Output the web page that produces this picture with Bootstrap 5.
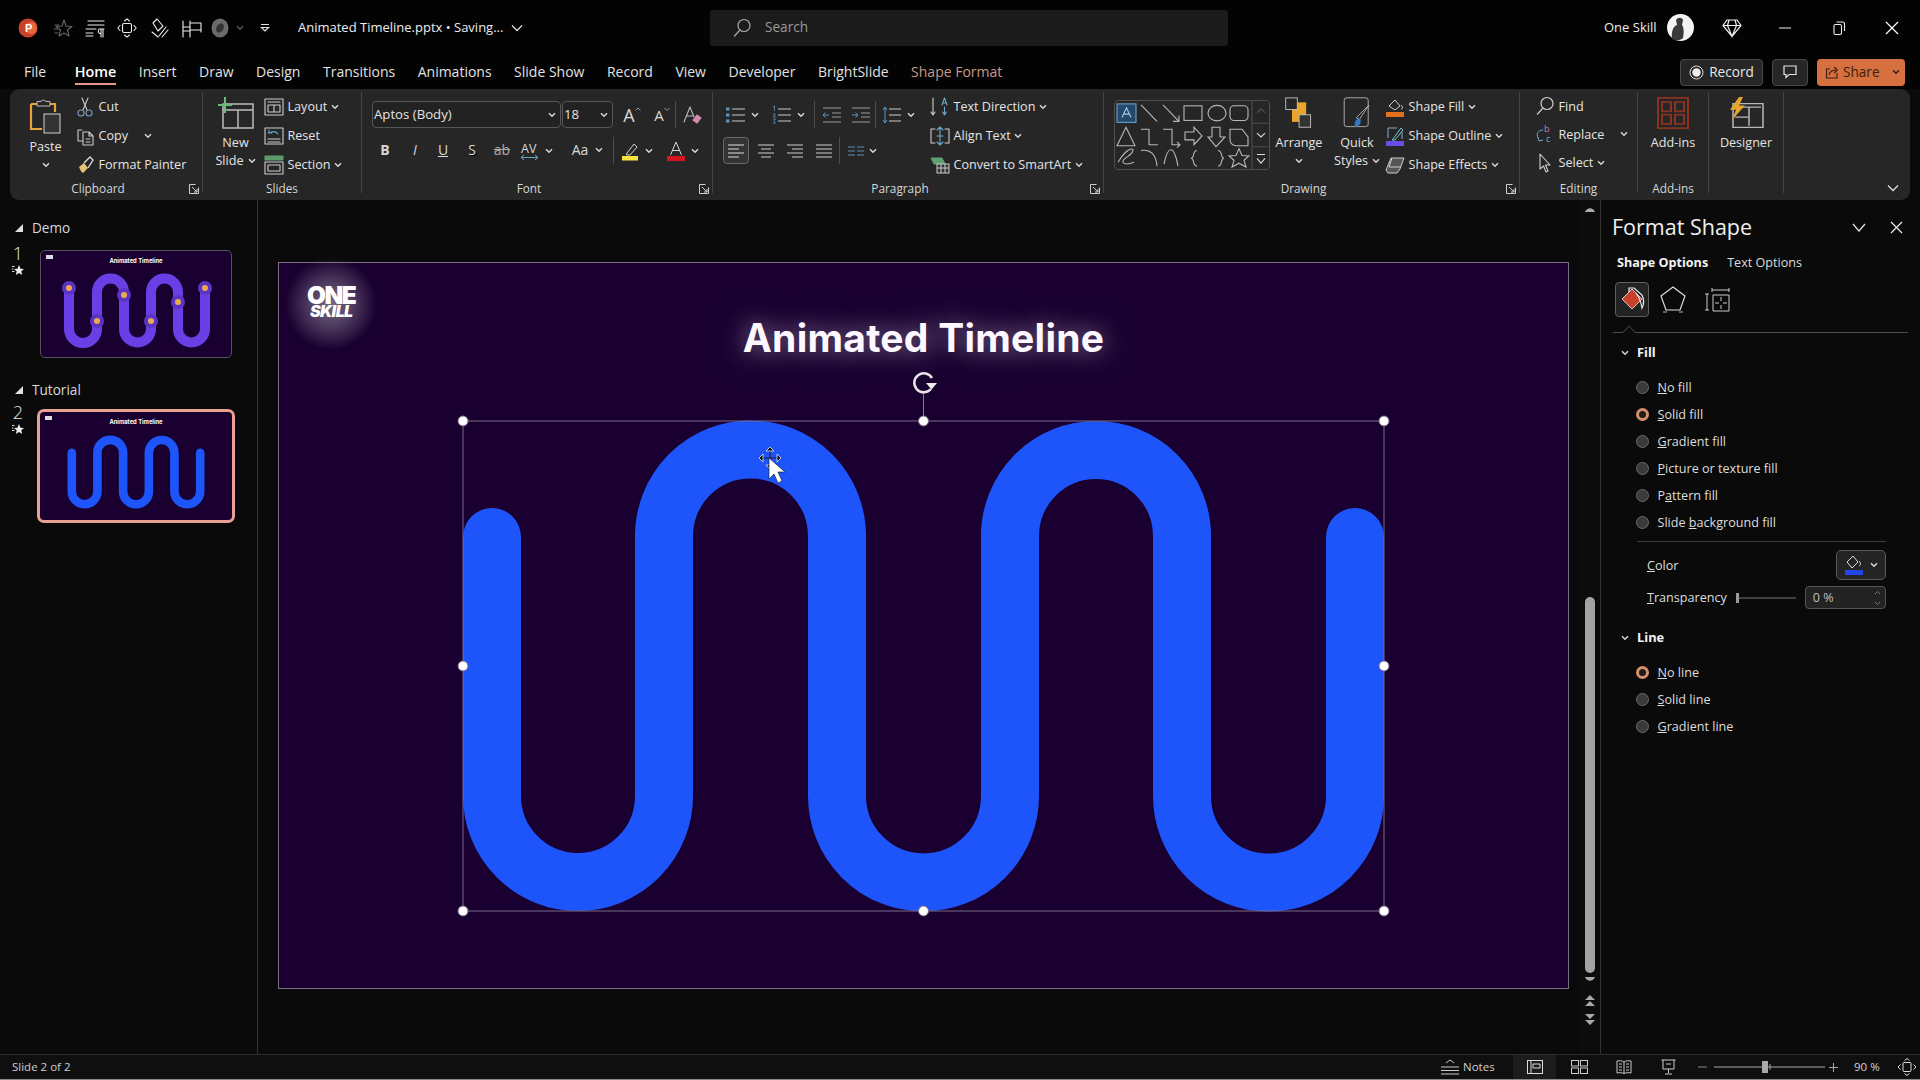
<!DOCTYPE html>
<html lang="en"><head><meta charset="utf-8"><title>Animated Timeline</title>
<link href="https://cdn.jsdelivr.net/npm/bootstrap@5.3.0/dist/css/bootstrap.min.css" rel="stylesheet">
<style>
html,body{margin:0;height:1080px;overflow:hidden;background:#0a0a0a}
body{font-family:"Open Sans","Noto Sans",sans-serif;font-size:12.6px;color:#e4e4e4;line-height:1.2}
svg{display:block;overflow:visible}
.ic{fill:none;stroke:#cdcdcd;stroke-width:1.1;stroke-linejoin:round;stroke-linecap:round}
.chv{width:8px;height:6px;fill:none;stroke:#d8d8d8;stroke-width:1.5}
.chv-dim{stroke:#555}
.chv-dk{stroke:#3a1d0e}
.app{height:1080px}
/* title bar */
.tbar{height:55px;background:#030303;display:grid;grid-template-columns:710px 518px 1fr;align-items:center}
.tleft{display:grid;grid-template-columns:35px 32px 32px 32px 33px 28px 26px 24px 38px auto;padding-left:18px;align-items:center;justify-items:start}
.search{height:36px;background:#1b1b1b;border-radius:3px;padding-left:22px;gap:13px;color:#9a9a9a;font-size:13.6px}
.tright{display:grid;grid-template-columns:63px 55px 57px 54px 52px auto;padding-left:376px;align-items:center;justify-items:start}
.ttl{font-size:13px;color:#ececec}
/* tabs */
.tabs{height:34px;background:#030303;padding-left:24px;padding-right:15px;gap:22.5px;font-size:14px;color:#e2e2e2}
.tab-home{font-weight:600;font-size:14.4px;color:#fff;position:relative;margin-left:6px}
.tab-home::after{content:"";position:absolute;left:0;right:0;bottom:-4px;height:2px;background:#e9968a}
.tab-fmt{color:#c89a86}
.tbtns{margin-left:auto;gap:9px}
.bt-rec,.bt-com{height:27px;border:1px solid #4a4a4a;border-radius:4px;background:#262626;color:#e8e8e8;font-size:13.6px}
.bt-rec{width:83px;gap:5px}
.bt-com{width:36px}
.bt-shr{width:88px;height:27px;border-radius:4px;background:#d7703f;color:#3a1d0e;font-size:13.6px;gap:4px;padding-left:8px}
/* ribbon */
.ribbon{height:111px;margin:0 10px;background:#262626;border-radius:9px;padding-top:3px;display:flex}
.grp{height:101px;border-right:1px solid #454545;display:flex;flex-direction:column;flex:none}
.gbody{height:85px}
.glabel{height:16px;display:flex;line-height:22px;font-size:11.8px;color:#d6d6d6}
.glabel>span{flex:1;text-align:center}
.launch{width:16px;padding-top:7px;padding-left:3px}
.g-clip{width:193px}.g-slides{width:159px}.g-font{width:351px}.g-para{width:391px}.g-draw{width:416px}.g-edit{width:118px}.g-add{width:71px}.g-des{width:75px}
.b-clip{display:grid;grid-template-columns:59px auto;padding-left:6px}
.b-slides{display:grid;grid-template-columns:57px auto;padding-left:4px}
.b-draw{display:grid;grid-template-columns:155px 60px 56px auto;padding-left:10px}
.b-para{display:grid;grid-template-columns:217px auto}
.b-edit{padding-left:15px}
.bigb{display:flex;flex-direction:column;align-items:center;line-height:18px;color:#e4e4e4;text-align:center;padding-top:5px}
.bigb>svg{margin-bottom:5px}
.bigb .chv{margin:6px 0 0}
.inl{display:flex;align-items:center;justify-content:center;gap:4px}
.inl .chv{margin:0}
.rrow{height:29px;display:flex;align-items:center;gap:3.5px;white-space:nowrap;color:#e4e4e4}
.rcol{display:flex;flex-direction:column;margin-top:0}
.rrow svg.ri{width:20px;height:20px;flex:none}
.ml12{margin-left:12px}
.frow{height:27px;display:grid;align-items:center;justify-items:start;margin-top:9px}
.frow+.frow{margin-top:9px}
.fr1{grid-template-columns:190px 60px 30px 23px 7px auto;padding-left:10px}
.fr2{grid-template-columns:30px 28px 29px 30px 28px 50px 43px 7px 46px auto;padding-left:13px}
.pr1{grid-template-columns:46px 42px 8px 29px 24px 7px auto;padding-left:13px}
.pr2{grid-template-columns:34px 29px 29px 24px 9px auto;padding-left:10px}
.combo{height:27px;border:1px solid #565656;border-radius:4px;background:#222;display:flex;align-items:center;justify-content:space-between;padding:0 4px 0 1px;color:#e4e4e4;font-size:13.2px}
.cb-font{width:189px}.cb-size{width:51px}
.vsep{width:1px;height:27px;background:#4c4c4c}
.cellx{width:20px;display:flex;justify-content:center;font-size:14px;color:#d8d8d8}
.a-up{font-size:18px;line-height:22px}.a-dn{font-size:15px;line-height:22px}
.a-up svg,.a-dn svg{width:6px;height:4px;fill:none;stroke:#9a9a9a;margin-top:3px}
.fb{font-weight:700}.fi{font-style:italic}.fu{text-decoration:underline}.fs{text-shadow:1px 1px 1px #000}.fst{text-decoration:line-through;color:#aaa}
.withc{display:flex;align-items:center;gap:5px}
.sel-al{width:26px;height:27px;border:1px solid #6a6a6a;border-radius:4px;background:#333;display:flex;align-items:center;justify-content:center}
.collapse-c{flex:1;display:flex;align-items:flex-end;justify-content:flex-end;padding:0 11px 8px 0}
/* main */
.mainr{height:854px;display:flex;margin-top:0}
.lpane{width:258px;border-right:1px solid #333;padding-top:18px;flex:none;background:#0a0a0a}
.sect{height:20px;display:flex;align-items:center;padding-left:15px;gap:9px;font-size:13.6px;color:#d8d8d8}
.tri{width:0;height:0;border-left:8px solid transparent;border-bottom:8px solid #e0e0e0}
.slrow{display:grid;grid-template-columns:40px auto;margin-top:12px}
.snum{display:flex;flex-direction:column;align-items:center;width:36px;font-size:18px;font-weight:300;line-height:20px;color:#e8e8e8;margin-top:-7px}
.snum svg{margin-top:1px}
.th{width:192px;height:108px;background:#190030;border:1px solid #5a5060;border-radius:5px;overflow:hidden;position:relative}
.slrow2{grid-template-columns:37px auto;margin-top:9px}
.th2{width:198px;height:114px;background:#190030;border:3px solid #e8a092;border-radius:7px;overflow:hidden;position:relative}
.thtitle{position:absolute;left:0;right:0;top:6px;text-align:center;font:700 5.8px/8px Inter,sans-serif;color:#fff}
.thlogo{position:absolute;left:5px;top:4px;width:7px;height:4px;background:#ddd}
.sect2{margin-top:22px}
.canvasw{width:1322px;flex:none;padding:62px 0 0 20px;background:#0a0a0a}
.slide{width:1291px;height:727px;background:#190030;border:1px solid #7b6e82;position:relative}
.slide>svg{position:absolute;left:-1px;top:-1px}
.s-title{position:absolute;left:0;right:0;top:51px;text-align:center;font:700 39px/48px Inter,sans-serif;letter-spacing:.25px;color:#fdf8ff;text-shadow:0 0 24px rgba(255,255,255,.5),0 0 55px rgba(255,255,255,.2)}
.s-glow{position:absolute;left:6px;top:-5px;width:92px;height:92px;background:radial-gradient(closest-side,rgba(255,255,255,.42),rgba(255,255,255,.2) 55%,rgba(255,255,255,0))}
.s-logo{position:absolute;left:28px;top:23px;width:56px;color:#fff;text-align:left;font-family:Inter,sans-serif;font-weight:900;font-style:italic;line-height:13px}
.lg1{font-size:24.5px;letter-spacing:-1.6px;font-style:normal;line-height:19px}
.lg2{font-size:16px;letter-spacing:-.6px;padding-left:3px;line-height:13px}
.sbar{width:20px;flex:none;position:relative;display:flex;flex-direction:column;align-items:center;background:#0c0c0c;padding-top:6px}
.sth{width:10px;height:376px;background:#a3a3a3;border-radius:5px;margin-top:385px}
.s-d1{margin-top:11px}
.fpane{width:320px;border-left:1px solid #333;padding:13px 12px 0 12px;flex:none;background:#0a0a0a}
.fhead{height:28px;font-size:21.5px;color:#f0f0f0;font-weight:400;margin-left:-1px}
.fhead .ms{margin-left:auto;gap:24px;padding-right:5px}
.ftabs{gap:19px;padding-left:4px;margin-top:14px;font-size:12.6px;color:#dcdcdc}
.ftabs b{font-weight:700;color:#f4f4f4}
.ficons{display:grid;grid-template-columns:45px 44px auto;align-items:center;justify-items:start;padding-left:2px;margin-top:11px;margin-bottom:5px;height:36px}
.fbox{width:34px;height:35px;border:1px solid #5e5e5e;border-radius:4px;background:#232323;display:flex;align-items:center;justify-content:center}
.fline{height:16px;margin-bottom:0}
.fsec{display:flex;align-items:center;gap:8px;font-weight:700;color:#f2f2f2;padding-left:8px;height:20px;font-size:12.8px;margin-top:5px}
.rdo{height:27px;display:flex;align-items:center;gap:8.5px;padding-left:23px;color:#dedede;font-size:12.6px}
.rdo i{width:13px;height:13px;border-radius:50%;background:#3a3a3a;border:1px solid #6a6a6a;display:block}
.rdo i.on{background:#1d1d1d;border:3.5px solid #d68f6a}
.radios{margin-top:11px}
.fsep{height:1px;background:#3d3d3d;margin:5px 22px 0 24px}
.cl-row{display:flex;align-items:center;justify-content:space-between;padding:0 22px 0 34px;height:30px;margin-top:8px;color:#dedede}
.cbtn{width:50px;height:30px;border:1px solid #5a5a5a;border-radius:5px;background:#242424;gap:6px}
.tr-row{display:flex;align-items:center;padding-left:34px;height:23px;margin-top:6px;color:#dedede}
.tslide{margin-left:9px;width:62px;height:10px}
.spin{width:81px;height:23px;border:1px solid #555;border-radius:4px;background:#232323;margin-left:7px;padding:0 4px 0 7px;color:#bdbdbd;font-size:12.5px}
.sec2{margin-top:19px}
.rad2{margin-top:10.5px}
/* status */
.stat{height:25px;border-top:1px solid #2c2c2c;background:#0f0f0f;font-size:11.5px;color:#cfcfcf;padding-left:12px}
.sright{margin-left:auto;display:grid;grid-template-columns:72px 58px 45px 45px 37px 16px 115px 25px 43px auto;align-items:center;justify-items:start;height:24px;padding-right:3px}
.vhi{width:43px;height:24px;background:#1c1c1c;display:flex;align-items:center;justify-content:center}
.bstrip{height:1px;background:#8a8a8a}
</style></head>
<body>
<svg width="0" height="0" class="position-absolute">
<defs>
<symbol id="c" viewBox="0 0 8 6"><path d="M1 1.3 4 4.3 7 1.3"/></symbol>
<symbol id="lau" viewBox="0 0 10 10"><path d="M.5.5h6M.5.5v9h9v-6M3 3l5 5M8 5v3H5" fill="none" stroke="#cfcfcf" stroke-width="1"/></symbol>
<symbol id="wv" viewBox="0 0 1291 726"><path d="M214 275V534A86 86 0 0 0 386 534V274A86.500 86.500 0 0 1 559 274V534A86.500 86.500 0 0 0 732 534V274A86 86 0 0 1 904 274V534A86.500 86.500 0 0 0 1077 534V275" fill="none" stroke-width="58" stroke-linecap="round"/></symbol>
<symbol id="st" viewBox="0 0 12 12"><path d="M7 1 8.500 4.700 12 5 9.300 7.300 10.200 11 7 9 3.800 11 4.700 7.300 2 5 5.500 4.700Z" fill="#eee"/><path d="M0 2.500h2.500M0 5h1.500M0 7.500h2.500" stroke="#eee" stroke-width=".9"/></symbol>
</defs></svg>
<div class="app d-flex flex-column">
<header class="tbar">
 <div class="tleft">
  <svg width="20" height="20" viewBox="0 0 20 20"><circle cx="10" cy="10" r="9.500" fill="#c8402a"/><circle cx="13" cy="10" r="6" fill="#e8683a"/><text x="7" y="14" font-family="Liberation Sans" font-size="11" font-weight="700" fill="#fff">P</text></svg>
  <svg class="ic" width="20" height="20" viewBox="0 0 20 20"><path d="M11 2 13 8 19 8.500 14.500 12 16 18 11 15 6 18 7.500 12 3 8.500 9 8Z" stroke="#666"/><path d="M2 7h4M1 11h4M2 15h3" stroke="#666"/></svg>
  <svg class="ic" width="20" height="20" viewBox="0 0 20 20"><path d="M3 3H19M3 7H19M1 11H11M1 15H8M1 18H8M14 11h5M16 11V19M18 11V19M14 11a3 3 0 0 0 2 5" stroke="#eee"/></svg>
  <svg class="ic" width="20" height="20" viewBox="0 0 20 20"><rect x="5.500" y="5.500" width="9" height="9" rx="1.500" stroke="#eee"/><path d="M7.500 3 10 .8 12.500 3M7.500 17 10 19.200 12.500 17M3 7.500.8 10 3 12.500M17 7.500 19.200 10 17 12.500" stroke="#eee"/></svg>
  <svg class="ic" width="20" height="20" viewBox="0 0 20 20"><path d="M4 5 8 1l6 7-5 5ZM4 5l5 8M10 18 17 9M13 19l6-7M3 14l6 5" stroke="#eee"/></svg>
  <svg class="ic" width="20" height="20" viewBox="0 0 20 20"><path d="M1 3V19M8 3V19M8 5H19V12H8M1 9H8M1 13H8M19 12V14" stroke="#eee"/></svg>
  <svg width="20" height="20" viewBox="0 0 20 20"><ellipse cx="10" cy="10" rx="8.500" ry="9.500" fill="#6b6b6b"/><ellipse cx="10" cy="10" rx="3.500" ry="5" transform="rotate(30 10 10)" fill="#333"/></svg>
  <svg class="chv chv-dim" viewBox="0 0 8 6"><use href="#c"/></svg>
  <svg width="10" height="10" viewBox="0 0 10 10" fill="none" stroke="#e0e0e0" stroke-width="1.200"><path d="M1 1.500H9M1.500 4.500 5 8 8.500 4.500Z"/></svg>
  <div class="ttl d-flex align-items-center gap-2">Animated Timeline.pptx • Saving... <svg width="12" height="8" viewBox="0 0 12 8" fill="none" stroke="#ddd" stroke-width="1.300"><path d="M1 1.500 6 6.500 11 1.500"/></svg></div>
 </div>
 <div class="search d-flex align-items-center">
  <svg width="20" height="20" viewBox="0 0 20 20" fill="none" stroke="#a8a8a8" stroke-width="1.200"><circle cx="12" cy="7.500" r="6"/><path d="M8 12 2 18.500"/></svg><span>Search</span>
 </div>
 <div class="tright">
  <span class="ttl">One Skill</span>
  <svg width="27" height="27" viewBox="0 0 27 27"><circle cx="13.500" cy="13.500" r="13.500" fill="#f4f4f4"/><path d="M5 25C4 16 7 12 10 11L9 6c2-3 6-3 7 0l-1 5c2 2 2 8 1 13 -3 3-8 3-11 1Z" fill="#3a3a3a"/></svg>
  <svg width="20" height="20" viewBox="0 0 20 20" fill="none" stroke="#eee" stroke-width="1.200"><path d="M5 2H15L19 7.500 10 18.500 1 7.500ZM1 7.500H19M7 2 5.500 7.500 10 18.500 14.500 7.500 13 2"/></svg>
  <svg width="12" height="2" viewBox="0 0 12 2"><path d="M0 1H12" stroke="#eee" stroke-width="1"/></svg>
  <svg width="12" height="14" viewBox="0 0 12 14" fill="none" stroke="#eee" stroke-width="1.100"><rect x="1" y="3.500" width="7.500" height="10" rx="1.500"/><path d="M3.500 1H9.500a2 2 0 0 1 2 2V10"/></svg>
  <svg width="14" height="14" viewBox="0 0 14 14" stroke="#fff" stroke-width="1.200"><path d="M1 1 13 13M13 1 1 13"/></svg>
 </div>
</header>
<nav class="tabs d-flex align-items-center">
 <span>File</span><span class="tab-home">Home</span><span>Insert</span><span>Draw</span><span>Design</span><span>Transitions</span><span>Animations</span><span>Slide Show</span><span>Record</span><span>View</span><span>Developer</span><span>BrightSlide</span><span class="tab-fmt">Shape Format</span>
 <div class="tbtns d-flex">
 <div class="bt-rec d-flex align-items-center justify-content-center"><svg width="15" height="15" viewBox="0 0 15 15"><circle cx="7.500" cy="7.500" r="6.500" fill="none" stroke="#ddd"/><circle cx="7.500" cy="7.500" r="4.200" fill="#eee"/></svg>Record</div>
 <div class="bt-com d-flex align-items-center justify-content-center"><svg width="14" height="14" viewBox="0 0 14 14" fill="none" stroke="#e4e4e4" stroke-width="1.200"><path d="M1 1H13V9.500H6L3 12.500V9.500H1Z"/></svg></div>
 <div class="bt-shr d-flex align-items-center"><svg width="14" height="14" viewBox="0 0 14 14" fill="none" stroke="#3a1d0e" stroke-width="1.100"><path d="M5 4H1.500V13H12V8M4 10C5 6 8 5 11 5M9 2 12.500 5 9 8"/></svg><span>Share</span><svg class="chv chv-dk ms-2" viewBox="0 0 8 6"><use href="#c"/></svg></div>
 </div>
</nav>
<section class="ribbon">
 <!-- clipboard -->
 <div class="grp g-clip"><div class="gbody b-clip">
  <div class="bigb"><svg width="34" height="36" viewBox="0 0 34 36" fill="none"><path d="M2 7H26V15M2 7V32H13" stroke="#e8a33c" stroke-width="2.200"/><path d="M8 8V4.500H12A3 3 0 0 1 17 4.500H21V9H8Z" stroke="#bbb" fill="#262626"/><rect x="15" y="17" width="16" height="19" fill="#333" stroke="#d0d0d0"/></svg><span>Paste</span><svg class="chv"><use href="#c"/></svg></div>
  <div class="rcol">
   <div class="rrow"><svg class="ri ic" viewBox="0 0 20 20"><path d="M7 1 12 13M13 1 8 13"/><circle cx="6" cy="16" r="3" stroke="#7c9bc4"/><circle cx="14" cy="16" r="3" stroke="#7c9bc4"/></svg>Cut</div>
   <div class="rrow"><svg class="ri ic" viewBox="0 0 20 20"><path d="M7 4H3V15H7M8 6H14L18 10V19H8ZM14 6V10H18M11 13H15M11 16H15"/></svg>Copy<svg class="chv ml12"><use href="#c"/></svg></div>
   <div class="rrow"><svg class="ri" viewBox="0 0 20 20"><path d="M4 12 9 8l4 5-5 5C6 17 5 14 4 12Z" fill="#e3c27a"/><path d="M9 8 15 2l3 3-5 8" fill="none" stroke="#ddd" stroke-width="1.300"/></svg>Format Painter</div>
  </div></div>
  <div class="glabel"><span>Clipboard</span><div class="launch"><svg width="10" height="10"><use href="#lau"/></svg></div></div>
 </div>
 <!-- slides -->
 <div class="grp g-slides"><div class="gbody b-slides">
  <div class="bigb"><svg width="36" height="32" viewBox="0 0 36 32" fill="none" stroke="#bdbdbd" stroke-width="1.500"><path d="M5 7H35V31H5ZM20 13V31M5 13H35"/><path d="M0 8H14M7 0V16" stroke="#6eb87a" stroke-width="2"/></svg><span>New</span><span class="inl">Slide<svg class="chv"><use href="#c"/></svg></span></div>
  <div class="rcol">
   <div class="rrow"><svg class="ri ic" viewBox="0 0 20 20"><rect x="1" y="2" width="18" height="16"/><path d="M4 5H16M4 8H16V15H4ZM10 8V15"/></svg>Layout<svg class="chv"><use href="#c"/></svg></div>
   <div class="rrow"><svg class="ri ic" viewBox="0 0 20 20"><rect x="1" y="2" width="18" height="16"/><path d="M4 7H6C8 5 12 5 14 8M5 4V7H8" stroke="#5fa8d3"/><path d="M4 13H16M4 16H16"/></svg>Reset</div>
   <div class="rrow"><svg class="ri ic" viewBox="0 0 20 20"><path d="M1 1H19V5H1Z" fill="#5d9b6c" stroke="#5d9b6c"/><rect x="1" y="7" width="18" height="12"/><path d="M4 10H16V16H4Z"/></svg>Section<svg class="chv"><use href="#c"/></svg></div>
  </div></div>
  <div class="glabel"><span>Slides</span></div>
 </div>
 <!-- font -->
 <div class="grp g-font"><div class="gbody">
  <div class="frow fr1">
   <div class="combo cb-font"><span>Aptos (Body)</span><svg class="chv"><use href="#c"/></svg></div>
   <div class="combo cb-size"><span>18</span><svg class="chv"><use href="#c"/></svg></div>
   <span class="cellx a-up">A<svg viewBox="0 0 6 4"><path d="M.5 3.500 3 1 5.500 3.500"/></svg></span><span class="cellx a-dn">A<svg viewBox="0 0 6 4"><path d="M.5 1 3 3.500 5.500 1"/></svg></span><span class="vsep"></span>
   <svg class="ic" width="20" height="20" viewBox="0 0 20 20"><path d="M2 17 8 2 12 12M4.500 11H11" stroke="#bbb"/><path d="M11 15 15 10 19 13 15 18Z" fill="#d58ab0" stroke="#d58ab0"/></svg>
  </div>
  <div class="frow fr2">
   <span class="cellx fb">B</span><span class="cellx fi">I</span><span class="cellx fu">U</span><span class="cellx fs">S</span><span class="cellx fst">ab</span>
   <div class="withc"><svg width="20" height="20" viewBox="0 0 20 20" fill="none"><text x="1" y="12" font-family="Open Sans" font-size="12.500" fill="#d8d8d8" stroke="none">AV</text><path d="M1 16.500H18M4 14 1 16.500 4 19M15 14 18 16.500 15 19" stroke="#6aa3c4"/></svg><svg class="chv"><use href="#c"/></svg></div>
   <div class="withc"><span class="cellx">Aa</span><svg class="chv"><use href="#c"/></svg></div>
   <span class="vsep"></span>
   <div class="withc"><svg width="20" height="20" viewBox="0 0 20 20" fill="none"><path d="M7 12 14 3l3 3-7 8H6.500Z" stroke="#d0d0d0"/><rect x="2" y="15" width="16" height="4.500" fill="#f3e53c"/></svg><svg class="chv"><use href="#c"/></svg></div>
   <div class="withc"><svg width="20" height="20" viewBox="0 0 20 20" fill="none"><path d="M4.500 14 10 1l5.500 13M6.500 9.500H13.500" stroke="#d8d8d8"/><rect x="1" y="15" width="18" height="5" fill="#d41320"/></svg><svg class="chv"><use href="#c"/></svg></div>
  </div></div>
  <div class="glabel"><span>Font</span><div class="launch"><svg width="10" height="10"><use href="#lau"/></svg></div></div>
 </div>
 <!-- paragraph -->
 <div class="grp g-para"><div class="gbody b-para">
  <div>
  <div class="frow pr1">
   <div class="withc"><svg width="20" height="20" viewBox="0 0 20 20" stroke="#c8c8c8"><path d="M6 4H19M6 10H19M6 16H19"/><path d="M0 4H3.500M0 10H3.500M0 16H3.500" stroke="#5a93be" stroke-width="3"/></svg><svg class="chv"><use href="#c"/></svg></div>
   <div class="withc"><svg width="20" height="20" viewBox="0 0 20 20" stroke="#c8c8c8"><path d="M6 4H19M6 10H19M6 16H19"/><path d="M1 2 2.500 1V6M1 9H3.500L1 12H4M1 14H3.500L2 16 3.500 18H1" fill="none" stroke="#5a93be" stroke-width=".8"/></svg><svg class="chv"><use href="#c"/></svg></div>
   <span class="vsep"></span>
   <svg width="20" height="20" viewBox="0 0 20 20" stroke="#999" fill="none"><path d="M1 3H19M10 8H19M10 12H19M1 17H19"/><path d="M1 10H7M3.500 7.500 1 10 3.500 12.500" stroke="#5a93be"/></svg>
   <svg width="20" height="20" viewBox="0 0 20 20" stroke="#999" fill="none"><path d="M1 3H19M10 8H19M10 12H19M1 17H19"/><path d="M1 10H7M4.500 7.500 7 10 4.500 12.500" stroke="#5a93be"/></svg>
   <span class="vsep"></span>
   <div class="withc"><svg width="20" height="20" viewBox="0 0 20 20" stroke="#cfcfcf" fill="none"><path d="M7 4H19M7 10H19M7 16H19"/><path d="M3 2V18M1 5 3 2 5 5M1 15 3 18 5 15" stroke="#5a93be"/></svg><svg class="chv"><use href="#c"/></svg></div>
  </div>
  <div class="frow pr2">
   <div class="sel-al"><svg width="18" height="16" viewBox="0 0 18 16" stroke="#dedede"><path d="M1 2H17M1 6H12M1 10H17M1 14H12"/></svg></div>
   <svg width="18" height="16" viewBox="0 0 18 16" stroke="#cfcfcf"><path d="M1 2H17M4 6H14M1 10H17M4 14H14"/></svg>
   <svg width="18" height="16" viewBox="0 0 18 16" stroke="#cfcfcf"><path d="M1 2H17M6 6H17M1 10H17M6 14H17"/></svg>
   <svg width="18" height="16" viewBox="0 0 18 16" stroke="#cfcfcf"><path d="M1 2H17M1 6H17M1 10H17M1 14H17"/></svg>
   <span class="vsep"></span>
   <div class="withc"><svg width="16" height="14" viewBox="0 0 16 14" stroke="#5a8ba8"><path d="M0 3H7M0 7H7M0 11H7M9 3H16M9 7H16M9 11H16"/></svg><svg class="chv"><use href="#c"/></svg></div>
  </div></div>
  <div class="rcol">
   <div class="rrow"><svg class="ri ic" viewBox="0 0 20 20"><path d="M3 1V18M1 15 3 18 5 15"/><path d="M12 8 14.500 1 17 8M13 6H16M14.500 10V18M12.500 15 14.500 18 16.500 15" stroke="#6ea9c9"/></svg>Text Direction<svg class="chv"><use href="#c"/></svg></div>
   <div class="rrow"><svg class="ri ic" viewBox="0 0 20 20"><path d="M5 3H1V17H5M15 3H19V17H15" /><path d="M10 1V19M7 4 10 1 13 4M7 16 10 19 13 16M7 10H13" stroke="#6ea9c9"/></svg>Align Text<svg class="chv"><use href="#c"/></svg></div>
   <div class="rrow"><svg class="ri" viewBox="0 0 20 20" fill="none"><path d="M1 3H12L15 9H4Z" fill="#5fa073" stroke="#5fa073"/><rect x="7" y="9" width="12" height="9" fill="#333" stroke="#ccc"/><path d="M7 13H19M11 9V18M15 9V18" stroke="#ccc"/></svg>Convert to SmartArt<svg class="chv"><use href="#c"/></svg></div>
  </div></div>
  <div class="glabel"><span>Paragraph</span><div class="launch"><svg width="10" height="10"><use href="#lau"/></svg></div></div>
 </div>
 <!-- drawing -->
 <div class="grp g-draw"><div class="gbody b-draw">
  <svg class="mt-2" width="156" height="70" viewBox="0 0 156 72" preserveAspectRatio="none" fill="none" stroke="#b8b8b8" stroke-width="1.100">
   <rect x=".5" y=".5" width="155" height="71" rx="4" stroke="#4e4e4e"/><path d="M138 .5V71.500M138 24H155M138 48H155" stroke="#4e4e4e"/>
   <rect x="3" y="4" width="19" height="19" fill="#24496b" stroke="#6aa0d0"/><path d="M8 18 12.500 8 17 18M9.500 14.500H15.500" stroke="#a8c8e4"/>
   <path d="M27 5 43 22M49 5 65 22M65 16V22H59"/><rect x="70" y="6" width="18" height="15"/><ellipse cx="103" cy="13.500" rx="9" ry="8"/><rect x="116" y="6" width="18" height="15" rx="4"/>
   <path d="M12 28 21 47H3ZM27 30H35V46H44M49 30H58V46H66M63 43 66 46 63 49M71 33H80V28L88 37 80 46V41H71ZM98 28H106V38H111L102 48 94 38H98ZM116 30H128L134 38V47H122A6 6 0 0 1 116 41Z"/>
   <path d="M4 64C14 46 26 48 14 58 4 64 10 68 20 64M27 52C36 50 42 56 43 68M50 66C54 46 60 46 64 68M83 52C78 52 81 60 77 60 81 60 78 68 83 68M104 52C109 52 106 60 110 60 106 60 109 68 104 68M125 50 128 57 135 57.500 130 62 132 69 125 65 118 69 120 62 115 57.500 122 57Z"/>
   <path d="M143 13 147 9 151 13" stroke="#555"/><path d="M143 34 147 38 151 34M143 56H151M143 60 147 65 151 60" stroke="#dcdcdc"/>
  </svg>
  <div class="bigb"><svg width="33" height="32" viewBox="0 0 33 36" fill="none"><rect x="8" y="6" width="16" height="22" fill="#eba42d"/><rect x="1" y="1" width="13" height="13" fill="#262626" stroke="#c6c6c6"/><rect x="16" y="20" width="13" height="14" fill="#333" stroke="#c6c6c6"/></svg><span>Arrange</span><svg class="chv"><use href="#c"/></svg></div>
  <div class="bigb"><svg width="30" height="32" viewBox="0 0 34 40" fill="none"><rect x="1" y="1" width="30" height="36" rx="3" stroke="#c6c6c6"/><path d="M32 10 20 28 16 26Z" stroke="#c6c6c6" fill="#262626"/><path d="M14 36C14 30 17 26 21 27 23 32 20 38 14 37Z" fill="#2f79c8"/></svg><span>Quick</span><span class="inl">Styles<svg class="chv"><use href="#c"/></svg></span></div>
  <div class="rcol">
   <div class="rrow"><svg class="ri" viewBox="0 0 20 20" fill="none"><path d="M4 9 10 3 15 9 10 13Z" stroke="#d0d0d0"/><path d="M16 8C18 10 18 12 16 12" stroke="#d0d0d0"/><rect x="1" y="15" width="18" height="5" fill="#e2701c"/></svg>Shape Fill<svg class="chv"><use href="#c"/></svg></div>
   <div class="rrow"><svg class="ri" viewBox="0 0 20 20" fill="none"><path d="M3 12V2H12M17 6V13" stroke="#8ac"/><path d="M8 13 16 2 18 4 10 14H7Z" stroke="#7cc"/><rect x="1" y="15" width="18" height="5" fill="#6a4de8"/></svg>Shape Outline<svg class="chv"><use href="#c"/></svg></div>
   <div class="rrow"><svg class="ri" viewBox="0 0 20 20" fill="none"><path d="M1 15 6 3H19L15 14 12 18H3Z" fill="#555" stroke="#ccc"/><path d="M7 3 4 12H16" stroke="#ccc"/></svg>Shape Effects<svg class="chv"><use href="#c"/></svg></div>
  </div></div>
  <div class="glabel"><span>Drawing</span><div class="launch"><svg width="10" height="10"><use href="#lau"/></svg></div></div>
 </div>
 <!-- editing -->
 <div class="grp g-edit"><div class="gbody b-edit rcol">
   <div class="rrow"><svg class="ri" viewBox="0 0 20 20" fill="none" stroke="#ccc" stroke-width="1.200"><circle cx="12" cy="7.500" r="6"/><path d="M8 12 2 18.500"/></svg>Find</div>
   <div class="rrow"><svg class="ri" viewBox="0 0 20 20" fill="none"><text x="9" y="8" font-family="Open Sans" font-size="9" fill="#c679c0" stroke="none">b</text><text x="11" y="18" font-family="Open Sans" font-size="9" fill="#6ea9c9" stroke="none">c</text><path d="M8 6C3 6 1 10 3 14M8 16 4 17 3 13" stroke="#6ea9c9"/></svg>Replace<svg class="chv ml12"><use href="#c"/></svg></div>
   <div class="rrow"><svg class="ri ic" viewBox="0 0 20 20"><path d="M5 1V16L8.500 13 11 19 13 18 10.500 12H15Z"/></svg>Select<svg class="chv"><use href="#c"/></svg></div>
  </div>
  <div class="glabel"><span>Editing</span></div>
 </div>
 <!-- add-ins -->
 <div class="grp g-add"><div class="gbody">
  <div class="bigb"><svg width="32" height="32" viewBox="0 0 32 38" preserveAspectRatio="none" fill="none" stroke="#8a3320" stroke-width="2"><rect x="1" y="1" width="30" height="36"/><rect x="5" y="6" width="9" height="11"/><rect x="18" y="6" width="9" height="11"/><rect x="5" y="21" width="9" height="11"/><rect x="18" y="21" width="9" height="11"/></svg><span>Add-ins</span></div></div>
  <div class="glabel"><span>Add-ins</span></div>
 </div>
 <!-- designer -->
 <div class="grp g-des"><div class="gbody">
  <div class="bigb"><svg width="35" height="32" viewBox="0 0 35 38" preserveAspectRatio="none" fill="none"><path d="M4 8H34V36H4ZM6 12H32M20 12V34M6 24H20" stroke="#b8b8b8" stroke-width="1.500"/><path d="M10 0 1 15H7L3 27 16 10H10L14 0Z" fill="#e8a52d"/></svg><span>Designer</span></div></div>
  <div class="glabel"></div>
 </div>
 <div class="collapse-c"><svg width="12" height="8" viewBox="0 0 12 8" fill="none" stroke="#ddd" stroke-width="1.300"><path d="M1 1.500 6 6.500 11 1.500"/></svg></div>
</section>
<main class="mainr">
 <aside class="lpane">
  <div class="sect"><i class="tri"></i>Demo</div>
  <div class="slrow">
   <div class="snum"><span>1</span><svg width="12" height="12"><use href="#st"/></svg></div>
   <div class="th"><i class="thlogo"></i><div class="thtitle">Animated Timeline</div>
    <svg width="192" height="108" viewBox="0 0 192 108" fill="none" class="position-absolute top-0 start-0"><path d="M28 37V78A14 14 0 0 0 56 78V41A13.500 13.500 0 0 1 83 41V78A13.500 13.500 0 0 0 110 78V41A13.500 13.500 0 0 1 137 41V78A13.500 13.500 0 0 0 164 78V37" stroke="#6a3fe6" stroke-width="10" stroke-linecap="round"/>
    <g fill="#5a34c4"><circle cx="28" cy="37" r="7"/><circle cx="56" cy="70" r="7"/><circle cx="83" cy="44" r="7"/><circle cx="110" cy="70" r="7"/><circle cx="137" cy="51" r="7"/><circle cx="164" cy="37" r="7"/></g>
    <g fill="#eda952"><circle cx="28" cy="37" r="3"/><circle cx="56" cy="70" r="3"/><circle cx="83" cy="44" r="3"/><circle cx="110" cy="70" r="3"/><circle cx="137" cy="51" r="3"/><circle cx="164" cy="37" r="3"/></g></svg></div>
  </div>
  <div class="sect sect2"><i class="tri"></i>Tutorial</div>
  <div class="slrow slrow2">
   <div class="snum"><span>2</span><svg width="12" height="12"><use href="#st"/></svg></div>
   <div class="th2"><i class="thlogo"></i><div class="thtitle">Animated Timeline</div>
    <svg width="192" height="108" class="position-absolute top-0 start-0"><use href="#wv" stroke="#1e55fb"/></svg></div>
  </div>
 </aside>
 <div class="canvasw">
  <div class="slide">
   <div class="s-glow"></div>
   <div class="s-logo"><div class="lg1">ONE</div><div class="lg2">SKILL</div></div>
   <div class="s-title">Animated Timeline</div>
   <svg width="1291" height="726" viewBox="0 0 1291 726" fill="none">
    <use href="#wv" stroke="#1e55fb" width="1291" height="726"/>
    <rect x="185" y="159" width="921" height="490" stroke="#7c6a88" stroke-width="1"/>
    <path d="M645.500 131V159" stroke="#8a7a92"/>
    <g fill="#fff" stroke="#7a6a86" stroke-width="1"><circle cx="185" cy="159" r="5"/><circle cx="645.500" cy="159" r="5"/><circle cx="1106" cy="159" r="5"/><circle cx="185" cy="404" r="5"/><circle cx="1106" cy="404" r="5"/><circle cx="185" cy="649" r="5"/><circle cx="645.500" cy="649" r="5"/><circle cx="1106" cy="649" r="5"/></g>
    <path d="M653 127A9.500 9.500 0 1 1 654 116" stroke="#e8e4ea" stroke-width="2.500"/><path d="M648 121H659L653.500 127.500Z" fill="#eee"/>
    <path d="M492 187V205M483 196H501" stroke="#1b2d6b" stroke-width="1.500"/>
    <path d="M492 185 488 189H496ZM492 207 488 203H496ZM481 196 485 192V200ZM503 196 499 192V200Z" fill="#111" stroke="#fff" stroke-width=".7"/>
    <path d="M491 196V217L496 212 500 221 504 219 500 210H507Z" fill="#fff" stroke="#111" stroke-width=".6"/>
   </svg>
  </div>
 </div>
 <div class="sbar">
  <svg width="10" height="6" viewBox="0 0 10 6"><path d="M0 6C2 1 8 1 10 6Z" fill="#aaa"/></svg>
  <div class="sth"></div>
  <svg class="mt-1" width="10" height="6" viewBox="0 0 10 6"><path d="M0 0C2 5 8 5 10 0Z" fill="#aaa"/></svg>
  <svg class="s-d1" width="12" height="12" viewBox="0 0 12 12" fill="#aaa"><path d="M1 6 6 1 11 6ZM1 12 6 7 11 12Z"/></svg>
  <svg class="mt-2" width="12" height="12" viewBox="0 0 12 12" fill="#aaa"><path d="M1 0 6 5 11 0ZM1 6 6 11 11 6Z"/></svg>
 </div>
 <aside class="fpane">
  <div class="fhead d-flex align-items-center"><span>Format Shape</span><div class="ms d-flex align-items-center"><svg width="14" height="9" viewBox="0 0 14 9" fill="none" stroke="#e4e4e4" stroke-width="1.200"><path d="M1 1 7 8 13 1"/></svg><svg width="13" height="13" viewBox="0 0 13 13" stroke="#eee" stroke-width="1.200"><path d="M1 1 12 12M12 1 1 12"/></svg></div></div>
  <div class="ftabs d-flex"><b>Shape Options</b><span>Text Options</span></div>
  <div class="ficons">
   <div class="fbox"><svg width="26" height="26" viewBox="0 0 26 26"><path d="M3 13 13 3 23 13 13 23Z" fill="#c9412c" stroke="#eee" stroke-width=".8"/><path d="M10 6V2H15L23 9C25 13 25 18 23 22 22 16 21 12 17 7" fill="none" stroke="#eee" stroke-width="1.200"/></svg></div>
   <svg width="26" height="26" viewBox="0 0 26 26" fill="none" stroke="#ddd" stroke-width="1.200"><path d="M13 1 25 10 20 24H6L1 10Z"/><path d="M3 26H7M19 26H23" stroke-width=".8"/></svg>
   <svg width="26" height="26" viewBox="0 0 26 26" fill="none" stroke="#ccc" stroke-width="1"><path d="M8 4H25M8 2V6M25 2V6M1 8H5M1 24H5M3 8V24M9 9H25V25H9ZM17 11V15M17 19V23M11 17H15M19 17H23"/></svg>
  </div>
  <svg class="fline" width="296" height="16" viewBox="0 0 296 16" fill="none" stroke="#4d4d4d"><path d="M0 10.500H10L16 4 22 10.500H295"/></svg>
  <div class="fsec"><svg class="chv" viewBox="0 0 8 6"><use href="#c"/></svg>Fill</div>
  <div class="radios">
   <div class="rdo"><i></i><span><u>N</u>o fill</span></div>
   <div class="rdo"><i class="on"></i><span><u>S</u>olid fill</span></div>
   <div class="rdo"><i></i><span><u>G</u>radient fill</span></div>
   <div class="rdo"><i></i><span><u>P</u>icture or texture fill</span></div>
   <div class="rdo"><i></i><span>P<u>a</u>ttern fill</span></div>
   <div class="rdo"><i></i><span>Slide <u>b</u>ackground fill</span></div>
  </div>
  <div class="fsep"></div>
  <div class="cl-row"><span><u>C</u>olor</span><div class="cbtn d-flex align-items-center justify-content-center"><svg width="20" height="22" viewBox="0 0 20 22" fill="none"><path d="M3 8 9 2 14 8 8 14Z" stroke="#ddd"/><path d="M15 7C17 9 17 11 15 12" stroke="#ddd"/><rect x="1" y="16" width="18" height="5" fill="#2146ee"/></svg><svg class="chv" viewBox="0 0 8 6"><use href="#c"/></svg></div></div>
  <div class="tr-row"><span><u>T</u>ransparency</span><svg class="tslide" viewBox="0 0 62 10"><rect x="0" y="0" width="3" height="10" fill="#9a9a9a"/><path d="M3 5H60" stroke="#777"/></svg><div class="spin d-flex align-items-center justify-content-between"><span>0 %</span><svg width="7" height="16" viewBox="0 0 7 16" fill="none" stroke="#777"><path d="M1 4 3.500 1.500 6 4M1 12 3.500 14.500 6 12"/></svg></div></div>
  <div class="fsec sec2"><svg class="chv" viewBox="0 0 8 6"><use href="#c"/></svg>Line</div>
  <div class="rad2">
   <div class="rdo"><i class="on"></i><span><u>N</u>o line</span></div>
   <div class="rdo"><i></i><span><u>S</u>olid line</span></div>
   <div class="rdo"><i></i><span><u>G</u>radient line</span></div>
  </div>
 </aside>
</main>
<footer class="stat d-flex align-items-center">
 <span>Slide 2 of 2</span>
 <div class="sright">
  <div class="d-flex align-items-center gap-1"><svg width="18" height="16" viewBox="0 0 18 16" fill="none" stroke="#ccc"><path d="M5 4 9 1 13 4M0 8H18M0 11.500H18M0 15H18"/></svg><span>Notes</span></div>
  <div class="vhi"><svg width="16" height="14" viewBox="0 0 16 14" fill="none" stroke="#ddd"><rect x=".5" y=".5" width="15" height="13"/><path d="M4 1V13M6 4H13V8H6Z"/></svg></div>
  <svg width="17" height="14" viewBox="0 0 17 14" fill="none" stroke="#ccc"><rect x=".5" y=".5" width="7" height="5.500"/><rect x="9.500" y=".5" width="7" height="5.500"/><rect x=".5" y="8" width="7" height="5.500"/><rect x="9.500" y="8" width="7" height="5.500"/></svg>
  <svg width="16" height="14" viewBox="0 0 16 14" fill="none" stroke="#ccc"><path d="M8 2C6 .5 3 .5 1 1V13C3 12.500 6 12.500 8 13.500 10 12.500 13 12.500 15 13V1C13 .5 10 .5 8 2ZM8 2V13M3 4H6M3 7H6M3 10H6M10 4H13M10 7H13M10 10H13"/></svg>
  <svg width="15" height="16" viewBox="0 0 15 16" fill="none" stroke="#ccc"><path d="M.5 1H14.500M2 1V10H13V1M7.500 10V14M4 15H11M5 5H10"/></svg>
  <svg width="9" height="2" viewBox="0 0 9 2"><path d="M0 1H9" stroke="#888"/></svg>
  <svg width="112" height="14" viewBox="0 0 112 14"><path d="M0 7H111" stroke="#aaa"/><path d="M56 4V10" stroke="#aaa"/><rect x="48" y="1" width="6" height="12" fill="#aaa"/></svg>
  <svg width="9" height="9" viewBox="0 0 9 9"><path d="M0 4.500H9M4.500 0V9" stroke="#aaa"/></svg>
  <span>90 %</span>
  <svg width="20" height="18" viewBox="0 0 20 18" fill="none" stroke="#ddd"><rect x="6" y="4.500" width="8" height="9" rx="1"/><path d="M7.500 2.500 10 .5 12.500 2.500M7.500 15.500 10 17.500 12.500 15.500M3.500 6.500 1 9 3.500 11.500M16.500 6.500 19 9 16.500 11.500"/></svg>
 </div>
</footer>
<div class="bstrip"></div>
</div>
</body></html>
